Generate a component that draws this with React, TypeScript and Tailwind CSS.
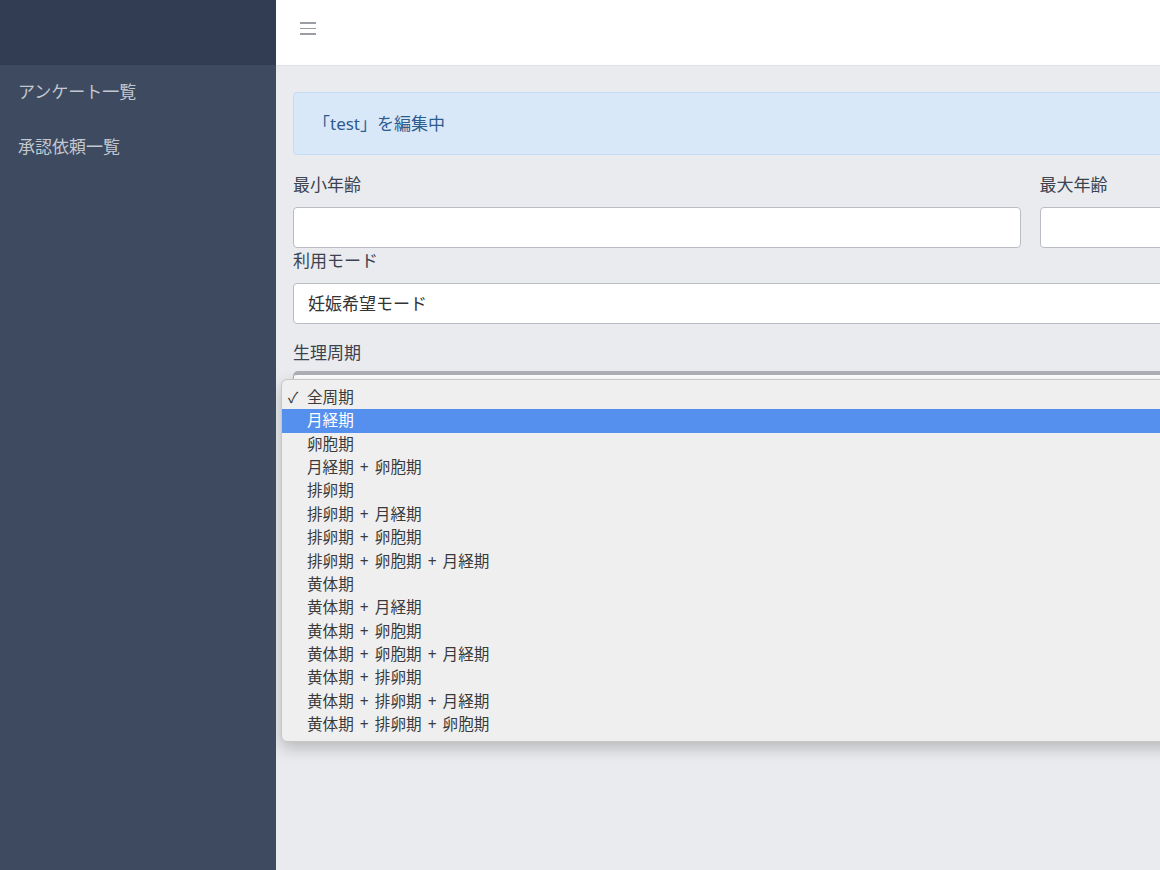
import React from "react";

const items = [
  "全周期",
  "月経期",
  "卵胞期",
  "月経期 + 卵胞期",
  "排卵期",
  "排卵期 + 月経期",
  "排卵期 + 卵胞期",
  "排卵期 + 卵胞期 + 月経期",
  "黄体期",
  "黄体期 + 月経期",
  "黄体期 + 卵胞期",
  "黄体期 + 卵胞期 + 月経期",
  "黄体期 + 排卵期",
  "黄体期 + 排卵期 + 月経期",
  "黄体期 + 排卵期 + 卵胞期",
];

export default function App() {
  return (
    <div
      className="flex h-[870px] w-[1160px] overflow-hidden"
      style={{ fontFamily: '"Noto Sans", "Noto Sans CJK JP", sans-serif' }}
    >
      <aside className="flex w-[276px] shrink-0 flex-col">
        <div className="h-[65px] bg-[#323c53]" />
        <nav className="flex flex-1 flex-col bg-[#3e4a5f] px-[18px] pt-[13px] text-[17px] text-[#c3c8d0]">
          <div className="h-[28px] leading-[28px]">アンケート一覧</div>
          <div className="mt-[27px] h-[28px] leading-[28px]">承認依頼一覧</div>
        </nav>
      </aside>
      <main className="relative flex min-w-0 flex-1 flex-col overflow-hidden">
        <header className="flex h-[66px] shrink-0 items-center border-b border-[#dfe1e5] bg-white pl-[24px]">
          <div className="flex w-[16px] flex-col gap-[4px] pb-[8px]">
            <span className="block h-[1.5px] w-full bg-[#9a9da3]" />
            <span className="block h-[1.5px] w-full bg-[#9a9da3]" />
            <span className="block h-[1.5px] w-full bg-[#9a9da3]" />
          </div>
        </header>
        <div className="flex-1 bg-[#e9ebee] pl-[17px] pt-[26px]">
          <div className="w-[1474px]">
            <div className="flex h-[63px] items-center rounded-[4px] border border-[#c6dcf4] bg-[#d9e8f9] px-[19px] text-[17px] text-[#2d5c8f]">
              「test」を編集中
            </div>
            <div className="mt-[18px] grid grid-cols-2 gap-x-[19px]">
              <div>
                <label className="block h-[24px] text-[17px] leading-[24px] text-[#3b4250]">最小年齢</label>
                <div className="mt-[10px] h-[41px] rounded-[4px] border border-[#b9bcc3] bg-white" />
              </div>
              <div>
                <label className="block h-[24px] text-[17px] leading-[24px] text-[#3b4250]">最大年齢</label>
                <div className="mt-[10px] h-[41px] rounded-[4px] border border-[#b9bcc3] bg-white" />
              </div>
            </div>
            <label className="mt-[1px] block h-[24px] text-[17px] leading-[24px] text-[#3b4250]">利用モード</label>
            <div className="mt-[10px] flex h-[41px] items-center rounded-[4px] border border-[#b9bcc3] bg-white px-[14px] text-[17px] text-[#333]">
              妊娠希望モード
            </div>
            <label className="mt-[17px] block h-[24px] text-[17px] leading-[24px] text-[#3b4250]">生理周期</label>
            <div className="relative mt-[6px]">
              <div className="h-[41px] rounded-[5px] border border-t-[4px] border-[#aeafb7] bg-white" />
              <div className="absolute left-[-12px] top-[8px] z-10 w-[1200px] rounded-[6px] border border-[#c6c6c6] bg-[#efefef] pb-[5px] pt-[6px] shadow-[0_6px_16px_rgba(0,0,0,0.22)]">
                {items.map((it, i) => (
                  <div
                    key={i}
                    className={
                      i === 1
                        ? "relative flex h-[23.36px] items-center bg-[#5690ee] pl-[25px] text-[15.6px] text-white [word-spacing:2px]"
                        : "relative flex h-[23.36px] items-center pl-[25px] text-[15.6px] text-[#3a3a3a] [word-spacing:2px]"
                    }
                  >
                    {i === 0 && (
                      <span className="absolute left-[6px] text-[15px] text-[#333]">✓</span>
                    )}
                    {it}
                  </div>
                ))}
              </div>
            </div>
          </div>
        </div>
      </main>
    </div>
  );
}
